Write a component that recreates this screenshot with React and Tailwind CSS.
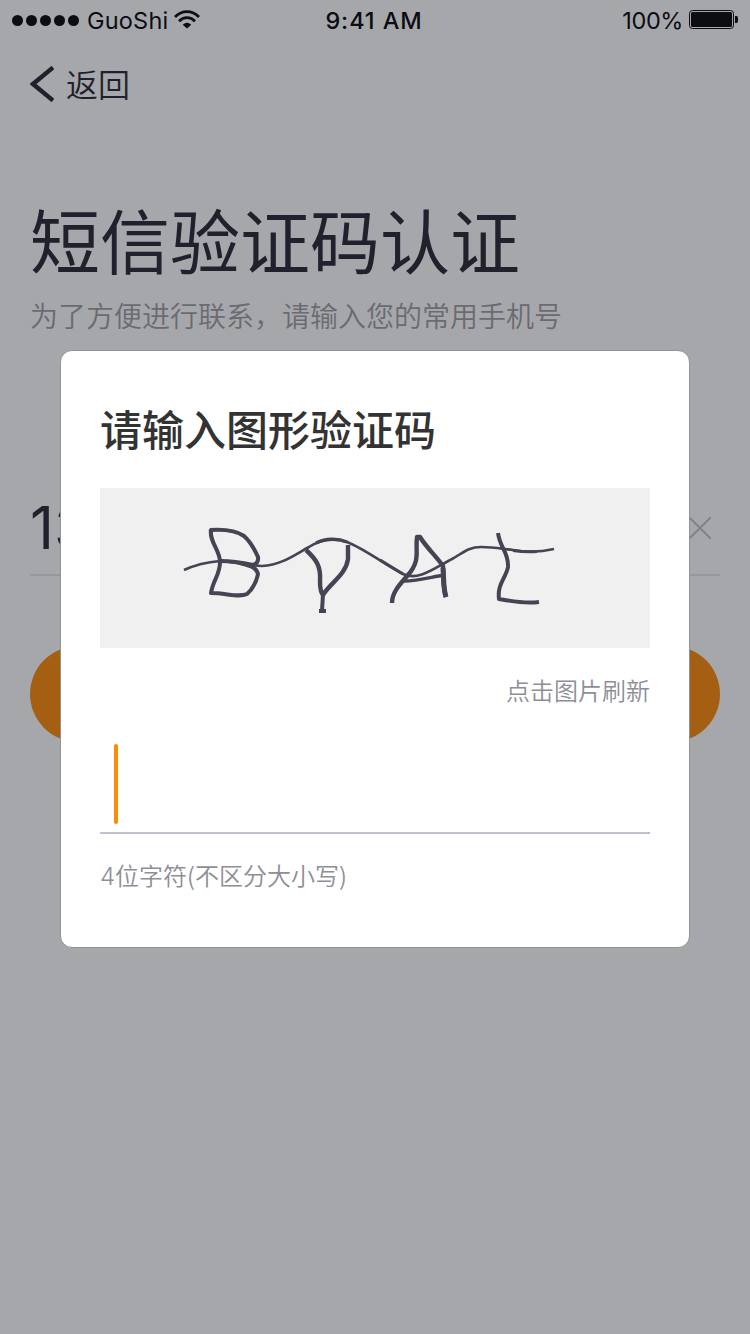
const cjk = "font-['Noto_Sans_CJK_SC','Noto_Sans',sans-serif]";

function StatusBar() {
  return (
    <header className="grid h-10 grid-cols-3 items-center pl-3 pr-[12px] font-['Inter',sans-serif] text-[23.5px] leading-10 text-[#0c0d12]">
      <div className="flex h-10 items-center">
        <div className="flex gap-[3px]">
          {[0, 1, 2, 3, 4].map((i) => (
            <span key={i} className="size-[11px] rounded-full bg-[#0c0d12]" />
          ))}
        </div>
        <span className="ml-2 whitespace-nowrap pt-[2px] tracking-[0.2px]">GuoShi</span>
        <svg className="ml-[6px] h-[19px] w-[26px] shrink-0 -mt-[1px]" viewBox="0 0 26 19" fill="none" stroke="#0c0d12" strokeWidth="2.8">
          <path d="M1 7C8-.2 18-.2 25 7" />
          <path d="M5 11.2C9.7 6.5 16.3 6.5 21 11.2" />
          <path d="M8.7 14.8Q13 10.5 17.3 14.8L13 18.5Z" fill="#0c0d12" stroke="none" />
        </svg>
      </div>
      <div className="-mr-[2px] h-10 whitespace-nowrap pr-1 pt-[1px] text-center font-[550] tracking-[0.9px]">9:41 AM</div>
      <div className="flex h-10 items-center justify-end">
        <span className="pt-[2px] tracking-[-0.4px]">100%</span>
        <svg className="ml-[6px] h-5 w-[49px]" viewBox="0 0 49 20">
          <rect x=".5" y=".5" width="44" height="18" rx="3" fill="none" stroke="#0c0d12" />
          <rect x="2" y="2" width="41" height="15" rx="1.5" fill="#0c0d12" />
          <path d="M46 6H47.5Q49 6 49 8V11Q49 13 47.5 13H46Z" fill="#0c0d12" />
        </svg>
      </div>
    </header>
  );
}

function Captcha() {
  return (
    <svg className="h-[160px] w-[550px] bg-[#f0f0f0]" viewBox="100 488 550 160" fill="none" stroke="#444453" strokeLinejoin="round">
      <path d="M184 570C195 565 208 562 220 561C237 562 248 566 262 566C282 565 296 554 309 547C321 539 334 538 347 542C365 549 387 566 403 574" strokeWidth="2.6" />
      <path d="M316 543C326 538 338 538 347 542M380 560L403 574" strokeWidth="3.2" />
      <path d="M403 574C418 582 438 566 452 559C463 553 468 547 481 547C494 547 503 549 513 550C530 553 541 552 554 549" strokeWidth="2.6" />
      <path d="M513 550.5C520 551.5 528 552 537 551.5" strokeWidth="3" />
      <path d="M210 530C226 529 237 531 244 536C252 543 255 551 258 557Q259 563 253 565C244 563 232 561 220 561" strokeWidth="4" />
      <path d="M211 529C209 542 220 550 220 562C220 575 213 580 211 593C226 593 239 598 247 594C254 588 257 579 258 574C256 567 251 566 240 563" strokeWidth="4" />
      <path d="M306 550C317 560 321 567 320 581C320 588 321 593 323 595C329 584 346 575 348 559L348 545" strokeWidth="4.4" />
      <path d="M323 594L322 611M319 611H326" strokeWidth="4" />
      <path d="M392 603C392 592 401 583 408 575C421 560 415 551 417 537H420C426 547 436 556 443 566C443 578 443 588 446 597" strokeWidth="4.4" />
      <path d="M443 568C444 577 443 588 446 597" strokeWidth="5" />
      <path d="M404 581C419 581 431 577 444 575" strokeWidth="3.4" />
      <path d="M498 533C500 548 509 553 508 567C506 578 497 584 499 599C512 601 523 604 539 602" strokeWidth="4" />
    </svg>
  );
}

function CaptchaDialog() {
  return (
    <section role="dialog" className="absolute left-[60px] top-[350px] flex h-[598px] w-[630px] flex-col rounded-[12px] border border-[#929396] bg-white px-[39px] pt-[49px]">
      <h2 className="h-[56px] text-[42px] font-medium leading-[56px] text-[#333333]">请输入图形验证码</h2>
      <div className="mt-8">
        <Captcha />
      </div>
      <button className="mt-[26px] h-8 self-end text-[24px] font-[350] leading-8 text-[#8e8e96]">点击图片刷新</button>
      <div className="mt-[31px] flex h-[97px] items-start border-b-2 border-[#c2c0d0] pl-[14px] pt-[7px]">
        <span className="h-20 w-1 rounded-full bg-[#ff8b00]" />
      </div>
      <p className="mt-[25px] h-8 whitespace-nowrap text-[24px] font-[350] leading-8 text-[#8e8e96]">
        <span className="font-['Inter',sans-serif] font-light">4</span>位字符(不区分大小写)
      </p>
    </section>
  );
}

export default function App() {
  return (
    <div className={`relative h-[1334px] w-[750px] overflow-hidden bg-[#a6a7ab] text-[#20212c] ${cjk}`}>
      <StatusBar />
      <nav className="flex h-[88px] items-center pl-[30px]">
        <svg className="h-9 w-6" viewBox="0 0 24 36" fill="none" stroke="#20212c" strokeWidth="4.4">
          <path d="M23 1.5L3 18L23 34.5" />
        </svg>
        <span className="ml-3 -mt-[3px] text-[32px] font-[350] leading-[48px]">返回</span>
      </nav>
      <main className="flex flex-col px-[30px] pt-[66px]">
        <h1 className="h-[90px] text-[70px] font-normal leading-[90px]">短信验证码认证</h1>
        <p className="mt-[11px] h-10 text-[28px] font-[350] leading-10 text-[#6a6b70]">为了方便进行联系，请输入您的常用手机号</p>
        <div className="mt-[141px] flex h-[100px] items-center justify-between border-b-2 border-[#96979f] pr-[9px]">
          <span className="mt-[6px] font-['Inter',sans-serif] text-[59px] leading-[80px]">13</span>
          <svg className="mt-[6px] size-[22px]" viewBox="0 0 22 22" stroke="#828388" strokeWidth="2">
            <path d="M0 0L22 22M22 0L0 22" />
          </svg>
        </div>
        <div className="mt-[70px] h-24 rounded-full bg-[#a55f13]" />
      </main>
      <CaptchaDialog />
    </div>
  );
}
